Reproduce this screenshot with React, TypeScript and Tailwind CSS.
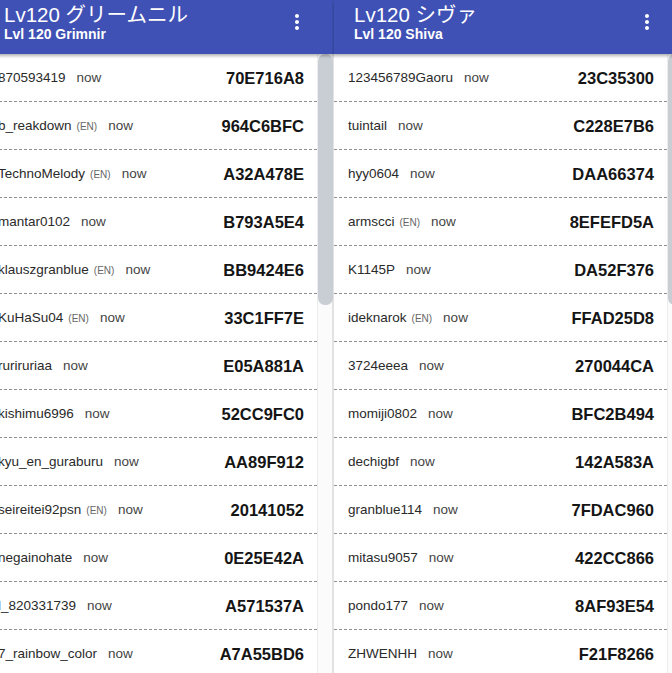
import React from "react";

type Row = { name: string; en?: boolean; code: string };

const left: Row[] = [
  { name: "870593419", code: "70E716A8" },
  { name: "b_reakdown", en: true, code: "964C6BFC" },
  { name: "TechnoMelody", en: true, code: "A32A478E" },
  { name: "mantar0102", code: "B793A5E4" },
  { name: "klauszgranblue", en: true, code: "BB9424E6" },
  { name: "KuHaSu04", en: true, code: "33C1FF7E" },
  { name: "ruriruriaa", code: "E05A881A" },
  { name: "kishimu6996", code: "52CC9FC0" },
  { name: "kyu_en_guraburu", code: "AA89F912" },
  { name: "seireitei92psn", en: true, code: "20141052" },
  { name: "negainohate", code: "0E25E42A" },
  { name: "l_820331739", code: "A571537A" },
  { name: "7_rainbow_color", code: "A7A55BD6" },
];

const right: Row[] = [
  { name: "123456789Gaoru", code: "23C35300" },
  { name: "tuintail", code: "C228E7B6" },
  { name: "hyy0604", code: "DAA66374" },
  { name: "armscci", en: true, code: "8EFEFD5A" },
  { name: "K1145P", code: "DA52F376" },
  { name: "ideknarok", en: true, code: "FFAD25D8" },
  { name: "3724eeea", code: "270044CA" },
  { name: "momiji0802", code: "BFC2B494" },
  { name: "dechigbf", code: "142A583A" },
  { name: "granblue114", code: "7FDAC960" },
  { name: "mitasu9057", code: "422CC866" },
  { name: "pondo177", code: "8AF93E54" },
  { name: "ZHWENHH", code: "F21F8266" },
];

function Dots() {
  return (
    <svg width="24" height="24" viewBox="0 0 24 24" fill="white">
      <path d="M12 8c1.1 0 2-.9 2-2s-.9-2-2-2-2 .9-2 2 .9 2 2 2zm0 2c-1.1 0-2 .9-2 2s.9 2 2 2 2-.9 2-2-.9-2-2-2zm0 6c-1.1 0-2 .9-2 2s.9 2 2 2 2-.9 2-2-.9-2-2-2z" />
    </svg>
  );
}

function Column({ title, sub, rows }: { title: string; sub: string; rows: Row[] }) {
  return (
    <div className="w-[350px] shrink-0 flex flex-col">
      <div className="h-[54px] bg-[#3f51b5] pl-5 pr-[25px] pt-[3px] flex items-start justify-between relative z-10 shadow-[0_2px_3px_rgba(0,0,0,0.3)]">
        <div className="text-white">
          <div className="text-[20.5px] leading-[23px] font-['Liberation_Sans','Noto_Sans_CJK_JP',sans-serif] whitespace-nowrap">
            {title}
          </div>
          <div className="text-[14px] leading-[16px] font-bold font-['Liberation_Sans',sans-serif] whitespace-nowrap">
            {sub}
          </div>
        </div>
        <div className="mt-[7px]">
          <Dots />
        </div>
      </div>
      <div className="flex flex-1">
        <div className="w-[334px] bg-white border-r border-[#ececec]">
          {rows.map((r, i) => (
            <div
              key={i}
              className="h-[48px] pt-px border-b border-dashed border-[#8f8f8f] flex items-center justify-between pl-[14px] pr-[13px] font-['Liberation_Sans',sans-serif]"
            >
              <div className="flex items-center whitespace-nowrap">
                <span className="text-[13.5px] text-[#2a2a2a]">{r.name}</span>
                {r.en && <span className="text-[10px] text-[#666] ml-[5px]">(EN)</span>}
                <span className="text-[13.5px] text-[#444] ml-[11px]">now</span>
              </div>
              <span className="text-[16.5px] font-bold text-[#151515]">{r.code}</span>
            </div>
          ))}
        </div>
        <div className="w-4 bg-[#fbfbfb] border-r-2 border-[#e2e2e2]">
          <div className="w-[15px] h-[251px] rounded-[7px] bg-[#c9cdd4]" />
        </div>
      </div>
    </div>
  );
}

export default function App() {
  return (
    <div className="w-[672px] h-[673px] overflow-hidden bg-white">
      <div className="flex -ml-4">
        <Column title="Lv120 グリームニル" sub="Lvl 120 Grimnir" rows={left} />
        <Column title="Lv120 シヴァ" sub="Lvl 120 Shiva" rows={right} />
      </div>
    </div>
  );
}
